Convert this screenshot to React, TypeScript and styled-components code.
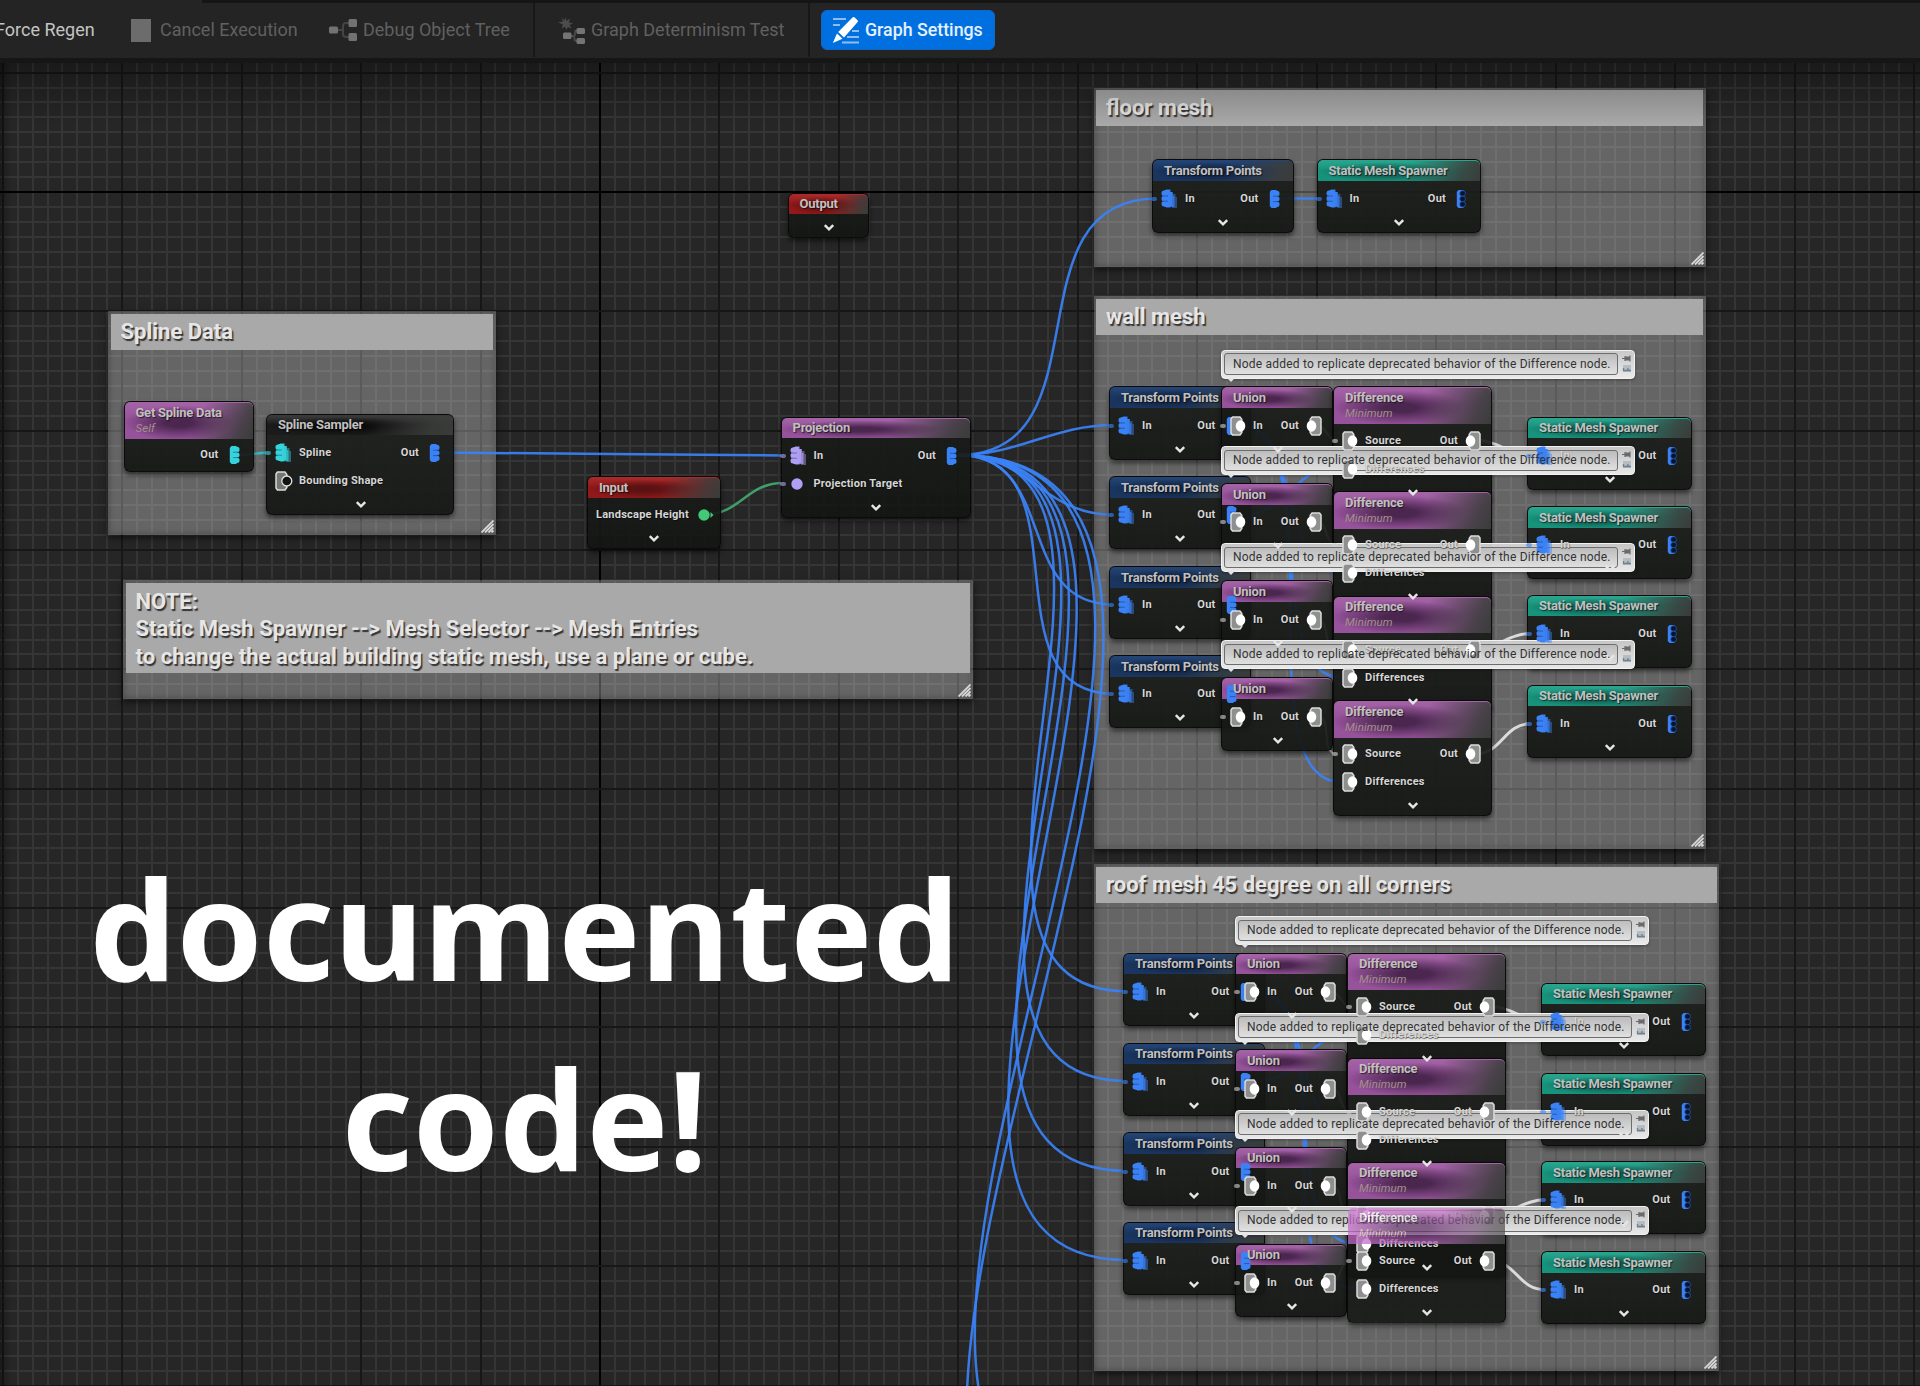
import React from "react";
import styled, { createGlobalStyle, css } from "styled-components";

const TOOLBAR_H = 63;
const BLUE = "#3b82f6";

const Global = createGlobalStyle`
  html, body { margin: 0; padding: 0; background: #262626; }
  body { width: 1920px; height: 1386px; overflow: hidden; }
  * { box-sizing: border-box; }
`;

/* ---------- shell ---------- */

const Shell = styled.div`
  display: flex;
  flex-direction: column;
  width: 1920px;
  height: 1386px;
  overflow: hidden;
  font-family: Roboto, "Liberation Sans", sans-serif;
  color: #c8c8c8;
`;

const TabStrip = styled.div`
  height: 3px;
  flex: none;
  margin-left: 202px;
  background: #151515;
`;

const Toolbar = styled.header`
  flex: none;
  height: ${TOOLBAR_H}px;
  display: flex;
  flex-direction: column;
  background: #242424;
  border-bottom: 5px solid #161616;
`;

const ToolRow = styled.div`
  flex: 1;
  display: flex;
  align-items: center;
  padding-bottom: 1px;
`;

const Tool = styled.div<{ $w: number; $dim?: boolean; $pull?: number }>`
  flex: none;
  width: ${(p) => p.$w}px;
  margin-left: ${(p) => -(p.$pull ?? 0)}px;
  display: flex;
  align-items: center;
  font-size: 18px;
  line-height: 22px;
  white-space: nowrap;
  color: ${(p) => (p.$dim ? "#606060" : "#c4c4c4")};
  svg { flex: none; }
`;

const ToolText = styled.span`
  margin: -1px 0 0 5px;
`;

const Divider = styled.div`
  width: 2px;
  height: 54px;
  background: #181818;
`;

const PrimaryTool = styled.button`
  margin: 0 0 0 11px;
  padding: 0 0 1px 10px;
  width: 174px;
  height: 40px;
  border: 1px solid #1266c4;
  border-radius: 6px;
  background: #0070e0;
  display: flex;
  align-items: center;
  gap: 5px;
  color: #e6f0fc;
  font: 500 17.8px Roboto, "Liberation Sans", sans-serif;
  white-space: nowrap;
`;

const StopSquare = styled.span`
  width: 20px;
  height: 23px;
  margin-right: 4px;
  background: #6c6c6c;
`;

/* ---------- canvas ---------- */

const Canvas = styled.main`
  flex: 1;
  position: relative;
  overflow: hidden;
  background: #262626;
`;

const World = styled.div`
  position: absolute;
  left: 0;
  top: -${TOOLBAR_H}px;
  width: 1920px;
  height: 1386px;
`;

const Layer = styled.svg`
  position: absolute;
  left: 0;
  top: 0;
  pointer-events: none;
`;

const Shade = styled.div`
  position: absolute;
  inset: 0;
  z-index: 9;
  pointer-events: none;
  background: linear-gradient(rgba(0, 0, 0, 0.32), rgba(0, 0, 0, 0) 62px),
    linear-gradient(to right, rgba(0, 0, 0, 0.3), rgba(0, 0, 0, 0) 12px);
`;

const CommentBox = styled.section<{ $x: number; $y: number; $w: number; $h: number }>`
  position: absolute;
  left: ${(p) => p.$x}px;
  top: ${(p) => p.$y}px;
  width: ${(p) => p.$w}px;
  height: ${(p) => p.$h}px;
  padding: 2.5px;
  background: rgba(255, 255, 255, 0.29);
  box-shadow: 0 3px 7px rgba(0, 0, 0, 0.6), inset 0 0 7px rgba(0, 0, 0, 0.35);
`;

const CommentTitle = styled.h2<{ $lines?: boolean }>`
  margin: 0;
  padding: ${(p) => (p.$lines ? "5px 10px 2px 10px" : "0 10px")};
  min-height: 35.5px;
  line-height: ${(p) => (p.$lines ? "27.7px" : "36px")};
  font-size: 22px;
  font-weight: 700;
  letter-spacing: ${(p) => (p.$lines ? 0.04 : 0)}px;
  white-space: pre;
  color: #e6e6e6;
  text-shadow: 1.5px 1.5px 1px rgba(30, 30, 30, 0.85);
  background: #a9a9a9;
`;

const Grip = styled.svg`
  position: absolute;
  right: 2px;
  bottom: 2px;
`;

/* ---------- nodes ---------- */

type Tone = "purple" | "navy" | "teal" | "red" | "dark";

const tones: Record<Tone, [string, string, string]> = {
  purple: ["#96529a", "#4b2750", "#a463a6"],
  navy: ["#1a3660", "#14233f", "#234474"],
  teal: ["#17937c", "#14594e", "#2aa58d"],
  red: ["#921819", "#5a1213", "#a82a2a"],
  dark: ["#1a1b1a", "#0c0c0c", "#3a3a3a"],
};

const NodeBox = styled.article<{ $x: number; $y: number; $w: number; $over?: boolean }>`
  position: absolute;
  left: ${(p) => p.$x}px;
  top: ${(p) => p.$y}px;
  width: ${(p) => p.$w}px;
  display: flex;
  flex-direction: column;
  &::before {
    content: "";
    position: absolute;
    inset: 0;
    z-index: 1;
    border-radius: 6px;
    background: linear-gradient(rgba(26, 28, 26, 0.9), rgba(20, 22, 20, 0.93));
    border: 1px solid rgba(5, 5, 5, 0.75);
    box-shadow: 0 3px 5px rgba(0, 0, 0, 0.55);
    ${(p) =>
      p.$over &&
      css`
        background: linear-gradient(transparent 36px, rgba(20, 22, 20, 0.88) 36px);
        border-top-color: transparent;
      `}
  }
`;

const Head = styled.header<{ $tone: Tone; $tall?: boolean; $over?: boolean }>`
  position: relative;
  margin: 1px 1px 0;
  height: ${(p) => (p.$tall ? 36.5 : 20.5)}px;
  padding: 1.5px 0 0 11px;
  ${(p) =>
    p.$over &&
    css`
      z-index: 7;
      opacity: 0.72;
      filter: brightness(1.3);
    `}
  &::before {
    content: "";
    position: absolute;
    inset: 0;
    z-index: 1;
    border-radius: 5px 5px 0 0;
    border-top: 1px solid ${(p) => tones[p.$tone][2]};
    background:
      linear-gradient(115deg, transparent 55%, rgba(60, 62, 60, 0.85) 88%, #3a3c3a 100%),
      radial-gradient(ellipse 42% 48% at 42% 55%, ${(p) => tones[p.$tone][1]} 25%, transparent 100%),
      linear-gradient(${(p) => tones[p.$tone][2]}, ${(p) => tones[p.$tone][0]} 45%);
  }
`;

const Title = styled.h3`
  position: relative;
  z-index: 5;
  margin: 0;
  font-size: 13px;
  line-height: 17px;
  font-weight: 700;
  letter-spacing: -0.25px;
  white-space: nowrap;
  color: #c0c0c0;
  text-shadow: 1px 1px 1px rgba(0, 0, 0, 0.6);
`;

const Sub = styled.p`
  position: relative;
  z-index: 5;
  margin: 0;
  font-size: 11.5px;
  line-height: 15px;
  letter-spacing: 0.1px;
  font-style: italic;
  color: #a38f8c;
`;

const Pins = styled.div<{ $tall?: boolean }>`
  display: flex;
  flex-direction: column;
  padding-top: ${(p) => (p.$tall ? 2.7 : 3.8)}px;
`;

const PinRow = styled.div`
  position: relative;
  z-index: 5;
  height: 28px;
  display: flex;
  align-items: center;
  justify-content: space-between;
  padding: 0 14px 0 9px;
`;

const PinSide = styled.div<{ $gap?: number; $shift?: number }>`
  display: flex;
  align-items: center;
  gap: ${(p) => p.$gap ?? 7}px;
  margin-right: ${(p) => p.$shift ?? 0}px;
`;

const PinLabel = styled.span`
  font-size: 11px;
  font-weight: 700;
  letter-spacing: 0.24px;
  line-height: 14px;
  white-space: nowrap;
  color: #d6d6d6;
  text-shadow: 0.5px 1px 1px rgba(0, 0, 0, 0.5);
`;

const Stub = styled.i<{ $c: string }>`
  position: absolute;
  left: -1px;
  width: 6px;
  height: 4px;
  border-radius: 2px;
  background: ${(p) => p.$c};
  opacity: 0.6;
`;

const Foot = styled.footer`
  position: relative;
  z-index: 5;
  height: 20px;
  display: flex;
  align-items: center;
  justify-content: center;
  padding-left: 1px;
`;

const Gap = styled.div`
  height: 3px;
`;

const Bubble = styled.aside<{ $x: number; $y: number }>`
  position: absolute;
  z-index: 3;
  left: ${(p) => p.$x}px;
  top: ${(p) => p.$y}px;
  width: 414.5px;
  height: 29px;
  padding: 2.5px 2px 2.5px 2.5px;
  display: flex;
  align-items: center;
  gap: 4px;
  border-radius: 4px;
  border: 1.5px solid #f2f2f2;
  background: linear-gradient(rgba(205, 205, 205, 0.96), rgba(238, 238, 238, 0.97));
  box-shadow: 0 1px 3px rgba(0, 0, 0, 0.35);
  &::after {
    content: "";
    position: absolute;
    left: 5px;
    top: 27px;
    border: 4px solid transparent;
    border-top-color: #e4e4e4;
    border-bottom: 0;
  }
`;

const BubbleField = styled.div`
  width: 395px;
  height: 21.5px;
  border: 1px solid #6d6d6d;
  border-radius: 3px;
  background: linear-gradient(rgba(178, 178, 178, 0.6), rgba(222, 222, 222, 0.6));
`;

const BubbleText = styled.p<{ $x: number; $y: number }>`
  position: absolute;
  z-index: 6;
  left: ${(p) => p.$x}px;
  top: ${(p) => p.$y}px;
  margin: 0;
  font-size: 12px;
  line-height: 16px;
  letter-spacing: 0.21px;
  white-space: nowrap;
  color: #333;
`;

const Caption = styled.p`
  position: absolute;
  left: 84px;
  top: 832px;
  width: 881px;
  margin: 0;
  text-align: center;
  font: 700 138px/190px "Noto Sans", "Open Sans", sans-serif;
  color: #fff;
`;

/* ---------- drawings ---------- */

type PinKind = "stack" | "any" | "anyEmpty" | "dot" | "single";

const StackIn = ({ c }: { c: string }) => (
  <svg width="17" height="20" viewBox="0 0 17 20">
    <path d="M10 5h4.5v3H16v11h-5z" fill={c} opacity=".45" />
    <path d="M7 3h5v4h1.500v11H8z" fill={c} opacity=".72" />
    <path d="M5 .5h4.500v2.500H11v14H9.500v1.500H5z" fill={c} opacity=".9" />
    <g fill={c}>
      <rect x=".5" y="1.500" width="8" height="5.500" rx="2.500" />
      <rect x=".5" y="6.700" width="8" height="5.500" rx="2.500" />
      <rect x=".5" y="12" width="8" height="5.500" rx="2.500" />
      <rect x="3.500" y="1" width="5" height="17" />
    </g>
    <path d="M2 7h5M2 12.200h5" stroke="#10233f" strokeWidth=".7" opacity=".6" />
  </svg>
);

const StackOut = ({ c, empty }: { c: string; empty?: boolean }) => (
  <svg width="11" height="20" viewBox="0 0 11 20">
    <path d="M2.500 1h4.500l1 1v16l-1 1H2.500L.8 17V3z" fill={c} />
    <g fill={empty ? "#08142c" : c} stroke={empty ? "#2459b0" : c} strokeWidth={empty ? 0.8 : 0}>
      <rect x={empty ? 3.8 : 3} y="1.800" width={empty ? 5.6 : 7.5} height="5.400" rx="2.500" />
      <rect x={empty ? 3.8 : 3} y="7.200" width={empty ? 5.6 : 7.5} height="5.400" rx="2.500" />
      <rect x={empty ? 3.8 : 3} y="12.600" width={empty ? 5.6 : 7.5} height="5.400" rx="2.500" />
    </g>
    {!empty && <path d="M4 7.200h5M4 12.600h5" stroke="#10233f" strokeWidth=".7" opacity=".6" />}
  </svg>
);

const AnyPin = ({ flip, empty }: { flip?: boolean; empty?: boolean }) => (
  <svg width="18" height="20" viewBox="0 0 18 20">
    <g transform={flip ? "translate(18 0) scale(-1 1)" : undefined}>
      <path
        d="M2.500 1h7.500l1.800 2.500v13l-1.800 2.500h-7.500L1 17V3z"
        fill={empty ? "#777" : "#8f8f8f"}
        stroke="#dcdcdc"
        strokeWidth="1.500"
        strokeLinejoin="round"
      />
      {empty ? (
        <circle cx="11.800" cy="10" r="5" fill="#121412" stroke="#e4e4e4" strokeWidth="1.300" />
      ) : (
        <ellipse cx="10.500" cy="10" rx="4.800" ry="5.800" fill="#fff" />
      )}
    </g>
  </svg>
);

const DotPin = ({ c, arrow }: { c: string; arrow?: boolean }) => (
  <svg width="16" height="14" viewBox="0 0 16 14">
    <circle cx={arrow ? 6 : 7} cy="7" r="5.700" fill={c} />
    {arrow && <path d="M12.500 4l3 3-3 3z" fill={c} />}
  </svg>
);

const PinIcon = ({ kind, c, out }: { kind: PinKind; c: string; out?: boolean }) => {
  if (kind === "any") return <AnyPin flip={out} />;
  if (kind === "anyEmpty") return <AnyPin empty />;
  if (kind === "dot") return <DotPin c={c} arrow={out} />;
  return out ? <StackOut c={c} empty={kind === "single"} /> : <StackIn c={c} />;
};

const Chevron = () => (
  <svg width="12" height="8" viewBox="0 0 12 8">
    <path d="M1.800 1.200L6 5.300l4.200-4.100" fill="none" stroke="#e6e6e6" strokeWidth="2.500" />
  </svg>
);

const ResizeGrip = () => (
  <Grip width="13" height="13" viewBox="0 0 13 13">
    <path d="M.5 12.500L12.500.5M4 12.500l8.500-8.500M7.500 12.500l5-5M10.500 12.500l2-2" stroke="#d8d8d8" strokeWidth="1.800" />
  </Grip>
);

const BubbleIcons = () => (
  <svg width="10" height="23" viewBox="0 0 10 23">
    <path d="M0 5.500h3M3 3v5M4 4h3v3H4zM8 2.500v6" stroke="#6a6a6a" strokeWidth="1.200" fill="#6a6a6a" />
    <path d="M1 12v7h8v-7z" fill="#b4bcc4" />
    <path d="M1 17.500h8M1.500 15v3M6 15v3" stroke="#70808e" strokeWidth="1.300" />
  </svg>
);

const TreeIcon = () => (
  <svg width="29" height="22" viewBox="0 0 29 22">
    <path d="M8 11h6M20 4h-3q-3 0-3 3v8q0 3 3 3h3" fill="none" stroke="#444" strokeWidth="2" />
    <g fill="#727272">
      <rect x="0" y="7.500" width="9" height="7" rx="1.500" />
      <rect x="19.500" y="0" width="8.500" height="8" rx="1.500" />
      <rect x="19.500" y="14" width="8.500" height="8" rx="1.500" />
    </g>
  </svg>
);

const DeterminismIcon = () => (
  <svg width="28" height="29" viewBox="0 0 28 29">
    <path d="M7.500 1l1.200 4L12 2.500 11 6.500l4 .8-3.500 1.700 2 3.500-3.800-1.500L8.500 14 7 10.800 3.500 12.500 5 8.800 0 6l5-.2L3.500 2l3.200 2.500z" fill="#4c4c4c" />
    <path d="M13 20h2q2 0 2-2v-2q0-1.500 2-1.500M15 20q1 0 1.500 2v1q0 2 2.500 2" fill="none" stroke="#4a4a4a" strokeWidth="1.800" />
    <g fill="#747474">
      <rect x="5" y="16.500" width="8.500" height="6.500" rx="1.500" />
      <rect x="18.500" y="12" width="8.500" height="6" rx="1.500" />
      <rect x="18.500" y="22" width="8.500" height="6" rx="1.500" />
    </g>
  </svg>
);

const EditIcon = () => (
  <svg width="28" height="28" viewBox="0 0 28 28">
    <path d="M1 3h13M1 9h7M20 15h7M15 21h12M10 26.500h17" stroke="#8fbdf2" strokeWidth="1.800" />
    <path d="M20.500 1.500q1-1 2.200 0l2.800 2.800q1 1 0 2L12 21.500 6.200 16z" fill="#fff" />
    <path d="M5 17.500l5.500 5.200L.8 27z" fill="#fff" />
  </svg>
);

/* ---------- grid and wires ---------- */

const MAJOR_X = 119.45;
const MAJOR_Y = 119.35;

const GridLines = () => {
  const minor: React.ReactNode[] = [];
  const major: React.ReactNode[] = [];
  for (let i = -41; i <= 90; i++) {
    const x = Math.round(599 + (i * MAJOR_X) / 8);
    if (x < -2 || x > 1920) continue;
    const big = i % 8 === 0;
    (big ? major : minor).push(
      <rect key={"x" + i} x={x} y={0} width={2} height={1386} fill={i === 0 ? "#000" : big ? "#171717" : "#353535"} />
    );
  }
  for (let i = -13; i <= 81; i++) {
    const y = Math.round(191 + (i * MAJOR_Y) / 8);
    const big = i % 8 === 0;
    (big ? major : minor).push(
      <rect key={"y" + i} x={0} y={y} width={1920} height={2} fill={i === 0 ? "#000" : big ? "#171717" : "#353535"} />
    );
  }
  return (
    <Layer width="1920" height="1386" shapeRendering="crispEdges">
      {minor}
      {major}
    </Layer>
  );
};

interface Wire {
  p: [number, number, number, number];
  color?: string;
  width?: number;
  tension?: number;
}

const wirePath = ({ p: [x1, y1, x2, y2], tension }: Wire) => {
  const d = tension ?? (Math.abs(x2 - x1) + Math.abs(y2 - y1)) / 3;
  return `M${x1} ${y1}C${x1 + d} ${y1} ${x2 - d} ${y2} ${x2} ${y2}`;
};

const SRC: [number, number] = [958, 455];

const groupWires = (dx: number, dy: number, lastDiff: number): Wire[] => {
  const w: Wire[] = [];
  const srcY = [440, 545, 649].map((v) => v + dy).concat(lastDiff + 53.3);
  const difY = [467.7, 572.7, 677].map((v) => v + dy).concat(lastDiff + 81);
  const smsY = [455.3, 545, 633.5, 723.5].map((v) => v + dy);
  const uniY = [425, 521.5, 619, 716].map((v) => v + dy);
  const tensions = [0, 60, 80, 98];
  w.push({ p: [1242 + dx, 514.7 + dy, 1338 + dx, difY[0]] });
  [1, 2, 3].forEach((i) => w.push({ p: [1240 + dx, 425 + dy, 1340 + dx, difY[i]], tension: tensions[i] }));
  uniY.forEach((y, i) => w.push({ p: [1315 + dx, y, 1338 + dx, srcY[i]], color: "#dcdcdc", width: 2 }));
  smsY.forEach((y, i) => w.push({ p: [1474 + dx, srcY[i], 1532 + dx, y], color: "#e4e4e4", width: 3 }));
  return w;
};

const ROWS = [0, 89.8, 179.6, 268.8];
const wires: Wire[] = [
  { p: [...SRC, 1157, 198.5] },
  ...ROWS.map((r): Wire => ({ p: [...SRC, 1114, 425 + r] })),
  ...ROWS.map((r): Wire => ({ p: [...SRC, 1127, 991.3 + r] })),
  { p: [...SRC, 1112, 1507] },
  { p: [...SRC, 1112, 1596] },
  { p: [438, 452.5, 783, 455.5] },
  { p: [704, 514.5, 783, 483], color: "#43a870" },
  { p: [238, 455, 271, 452.5], color: "#2ec4cc" },
  { p: [1278, 198.5, 1321, 198.5] },
  ...groupWires(0, 0, 700.7),
  ...groupWires(14, 566.3, 1207),
];

const Wires = () => (
  <Layer width="1920" height="1386" fill="none">
    {wires.map((w, i) => (
      <path key={i} d={wirePath(w)} stroke={w.color ?? BLUE} strokeWidth={w.width ?? 2.5} opacity={0.92} />
    ))}
  </Layer>
);

/* ---------- node component ---------- */

interface Side {
  label: string;
  kind: PinKind;
  c?: string;
  stub?: boolean;
}

interface NodeProps {
  x: number;
  y: number;
  w: number;
  tone: Tone;
  title: string;
  sub?: string;
  rows?: { in?: Side; out?: Side }[];
  expand?: boolean;
  over?: boolean;
}

const inGap: Record<PinKind, number> = { stack: 7, single: 7, any: 5, anyEmpty: 6, dot: 8 };
const outGap: Record<PinKind, number> = { stack: 10, single: 10, any: 5, anyEmpty: 6, dot: 9 };
const outShift: Record<PinKind, number> = { stack: 0, single: 0, any: -3, anyEmpty: 0, dot: -1 };

const GraphNode = ({ x, y, w, tone, title, sub, rows = [], expand = true, over }: NodeProps) => (
  <NodeBox $x={x} $y={y} $w={w} $over={over}>
    <Head $tone={tone} $tall={!!sub} $over={over}>
      <Title>{title}</Title>
      {sub && <Sub>{sub}</Sub>}
    </Head>
    <Pins $tall={!!sub}>
      {rows.map((r, i) => (
        <PinRow key={i}>
          {r.in ? (
            <PinSide $gap={inGap[r.in.kind]}>
              {r.in.stub !== false && <Stub $c={r.in.kind === "any" ? "#d0d0d0" : r.in.c ?? BLUE} />}
              <PinIcon kind={r.in.kind} c={r.in.c ?? BLUE} />
              <PinLabel>{r.in.label}</PinLabel>
            </PinSide>
          ) : (
            <span />
          )}
          {r.out && (
            <PinSide $gap={outGap[r.out.kind]} $shift={outShift[r.out.kind]}>
              <PinLabel>{r.out.label}</PinLabel>
              <PinIcon kind={r.out.kind} c={r.out.c ?? BLUE} out />
            </PinSide>
          )}
        </PinRow>
      ))}
    </Pins>
    {expand ? <Foot><Chevron /></Foot> : <Gap />}
  </NodeBox>
);

const inStack: Side = { label: "In", kind: "stack" };
const outStack: Side = { label: "Out", kind: "stack" };
const outOpen: Side = { label: "Out", kind: "single" };
const anyIn = (label: string, stub = true): Side => ({ label, kind: "any", stub });

const TransformPoints = ({ x, y }: { x: number; y: number }) => (
  <GraphNode x={x} y={y} w={141.5} tone="navy" title="Transform Points" rows={[{ in: inStack, out: outStack }]} />
);

const Spawner = ({ x, y }: { x: number; y: number }) => (
  <GraphNode x={x} y={y} w={164.5} tone="teal" title="Static Mesh Spawner" rows={[{ in: inStack, out: outOpen }]} />
);

const Union = ({ x, y }: { x: number; y: number }) => (
  <GraphNode x={x} y={y} w={112} tone="purple" title="Union" rows={[{ in: anyIn("In"), out: anyIn("Out") }]} />
);

const Difference = ({ x, y, over }: { x: number; y: number; over?: boolean }) => (
  <GraphNode
    x={x}
    y={y}
    w={159}
    tone="purple"
    title="Difference"
    sub="Minimum"
    over={over}
    rows={[{ in: anyIn("Source"), out: anyIn("Out") }, { in: anyIn("Differences", false) }]}
  />
);

const BUBBLE_TEXT = "Node added to replicate deprecated behavior of the Difference node.";

const NoteBubble = ({ x, y }: { x: number; y: number }) => (
  <>
    <Bubble $x={x} $y={y}>
      <BubbleField />
      <BubbleIcons />
    </Bubble>
    <BubbleText $x={x + 12.5} $y={y + 6}>{BUBBLE_TEXT}</BubbleText>
  </>
);

const MeshGroup = ({ dx, dy, lastDiff, over }: { dx: number; dy: number; lastDiff: number; over?: boolean }) => (
  <>
    {ROWS.map((r) => <TransformPoints key={r} x={1109 + dx} y={386.4 + dy + r} />)}
    {[416.6, 506.2, 594.8, 684.7].map((y) => <Spawner key={y} x={1527 + dx} y={y + dy} />)}
    {[386.4, 483, 580.3, 677.4].map((y) => <Union key={y} x={1221 + dx} y={y + dy} />)}
    {[386.4, 491.2, 595.5].map((y) => <Difference key={y} x={1333 + dx} y={y + dy} />)}
    <Difference x={1333 + dx} y={lastDiff} over={over} />
    {[349.5, 446.2, 543.2, 640].map((y) => <NoteBubble key={y} x={1220.5 + dx} y={y + dy} />)}
  </>
);

const Comment = ({ x, y, w, h, title, lines }: { x: number; y: number; w: number; h: number; title: string; lines?: boolean }) => (
  <CommentBox $x={x} $y={y} $w={w} $h={h}>
    <CommentTitle $lines={lines}>{title}</CommentTitle>
    <ResizeGrip />
  </CommentBox>
);

const NOTE = "NOTE:\nStatic Mesh Spawner --> Mesh Selector --> Mesh Entries\nto change the actual building static mesh, use a plane or cube.";

export default function App() {
  return (
    <>
      <Global />
      <Shell>
        <Toolbar>
          <TabStrip />
          <ToolRow>
            <Tool $w={141} $pull={10}><ToolText>Force Regen</ToolText></Tool>
            <Tool $w={198} $dim><StopSquare /><ToolText>Cancel Execution</ToolText></Tool>
            <Tool $w={204} $dim><TreeIcon /><ToolText>Debug Object Tree</ToolText></Tool>
            <Divider />
            <Tool $w={23} />
            <Tool $w={250} $dim><DeterminismIcon /><ToolText>Graph Determinism Test</ToolText></Tool>
            <Divider />
            <PrimaryTool><EditIcon />Graph Settings</PrimaryTool>
          </ToolRow>
        </Toolbar>
        <Canvas>
          <World>
            <GridLines />
            <Comment x={108} y={311} w={387.5} h={224} title="Spline Data" />
            <Comment x={123} y={580} w={849.5} h={119} title={NOTE} lines />
            <Comment x={1093.5} y={87.5} w={612} h={179} title="floor mesh" />
            <Comment x={1093.5} y={296} w={612} h={552.5} title="wall mesh" />
            <Comment x={1093.5} y={864} w={625.5} h={507} title="roof mesh 45 degree on all corners" />
            <Wires />
            <Caption>documented<br />code!</Caption>
            <GraphNode x={123.5} y={401} w={130} tone="purple" title="Get Spline Data" sub="Self" expand={false}
              rows={[{ out: { label: "Out", kind: "stack", c: "#35d3dc" } }]} />
            <GraphNode x={266} y={413.5} w={188} tone="dark" title="Spline Sampler"
              rows={[{ in: { label: "Spline", kind: "stack", c: "#35d3dc" }, out: outStack }, { in: { label: "Bounding Shape", kind: "anyEmpty", stub: false } }]} />
            <GraphNode x={787.5} y={192.5} w={81.5} tone="red" title="Output" />
            <GraphNode x={780.5} y={416.8} w={190.5} tone="purple" title="Projection"
              rows={[{ in: { label: "In", kind: "stack", c: "#b0a0f4" }, out: outStack }, { in: { label: "Projection Target", kind: "dot", c: "#b0a0f4" } }]} />
            <GraphNode x={587} y={476} w={133.5} tone="red" title="Input"
              rows={[{ out: { label: "Landscape Height", kind: "dot", c: "#43c878" } }]} />
            <TransformPoints x={1152} y={159.4} />
            <Spawner x={1316.5} y={159.4} />
            <MeshGroup dx={0} dy={0} lastDiff={700.3} />
            <MeshGroup dx={14} dy={566.3} lastDiff={1206.6} over />
          </World>
          <Shade />
        </Canvas>
      </Shell>
    </>
  );
}
